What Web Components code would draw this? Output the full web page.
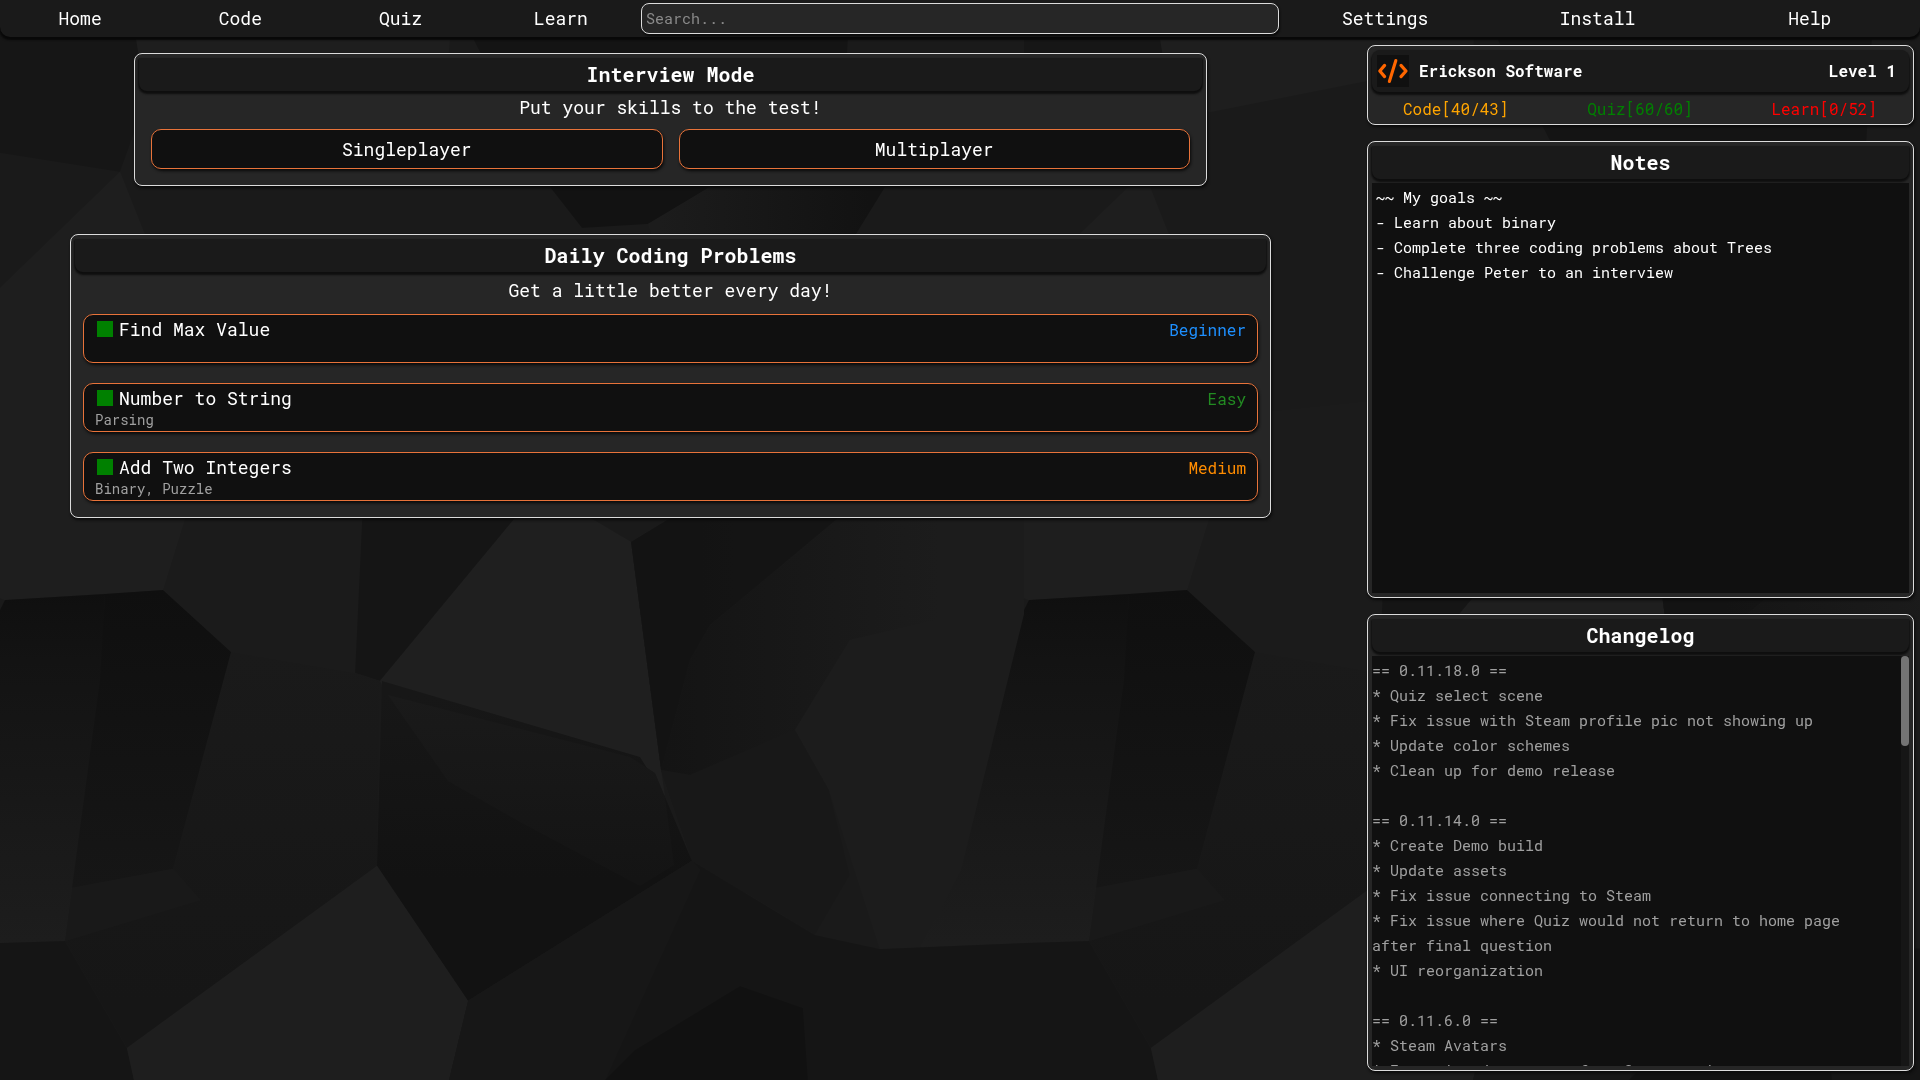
<!DOCTYPE html>
<html lang="en">
<head>
<meta charset="utf-8">
<title>Home</title>
<style>
  html { height: 100%; background: #1a1a1a; }
  body {
    --mono: "Roboto Mono", "DejaVu Sans Mono", "Liberation Mono", monospace;
    --bar: #1a1a1a;
    --panel: #262626;
    --well: #101010;
    --line: #dcdcdc;
    --accent: #e8733a;
    --muted: #a0a0a0;
    margin: 0;
    height: 100%;
    font: 18px/24px var(--mono);
    color: #fff;
    overflow: hidden;
  }
</style>
</head>
<body>
<app-shell>
  <app-nav slot="nav"></app-nav>

  <ui-panel slot="main" heading="Interview Mode" style="--w: 80%">
    <interview-menu></interview-menu>
  </ui-panel>
  <ui-panel slot="main" heading="Daily Coding Problems" style="--w: 1201px">
    <daily-list>
      <problem-card name="Find Max Value" level="Beginner" color="dodgerblue"></problem-card>
      <problem-card name="Number to String" level="Easy" color="forestgreen" tags="Parsing"></problem-card>
      <problem-card name="Add Two Integers" level="Medium" color="darkorange" tags="Binary, Puzzle"></problem-card>
    </daily-list>
  </ui-panel>

  <profile-card slot="side" name="Erickson Software" level="Level 1"></profile-card>
  <ui-panel slot="side" class="grow" heading="Notes"><notes-pad></notes-pad></ui-panel>
  <ui-panel slot="side" class="grow" heading="Changelog"><change-log>== 0.11.18.0 ==
* Quiz select scene
* Fix issue with Steam profile pic not showing up
* Update color schemes
* Clean up for demo release

== 0.11.14.0 ==
* Create Demo build
* Update assets
* Fix issue connecting to Steam
* Fix issue where Quiz would not return to home page after final question
* UI reorganization

== 0.11.6.0 ==
* Steam Avatars
* Interview data comes from Server using</change-log></ui-panel>
</app-shell>

<script>
const define = (name, html, setup) => {
  const template = document.createElement('template');
  template.innerHTML = html;
  customElements.define(name, class extends HTMLElement {
    connectedCallback() {
      if (this.shadowRoot) return;
      const root = this.attachShadow({ mode: 'open' });
      root.append(template.content.cloneNode(true));
      root.querySelectorAll('[data-attr]').forEach(el => {
        el.textContent = this.getAttribute(el.dataset.attr) || '';
      });
      if (setup) setup(this, root);
    }
  });
};

/* Faceted dark wallpaper, repeated every 1024px */
define('facet-backdrop', `
  <style>
    :host { display: block; position: fixed; inset: 0; z-index: -1; }
    svg { display: block; width: 100%; height: 100%; }
  </style>
  <svg aria-hidden="true">
    <defs>
      <linearGradient id="a" x1="0" y1="590" x2="0" y2="942" gradientUnits="userSpaceOnUse"><stop offset="0" stop-color="#0f0f0f"/><stop offset=".2" stop-color="#131313"/><stop offset="1" stop-color="#1d1d1d"/></linearGradient>
      <linearGradient id="b" x1="0" y1="590" x2="0" y2="888" gradientUnits="userSpaceOnUse"><stop offset="0" stop-color="#0f0f0f"/><stop offset="1" stop-color="#161616"/></linearGradient>
      <linearGradient id="h" x1="0" y1="652" x2="0" y2="1000" gradientUnits="userSpaceOnUse"><stop offset="0" stop-color="#1a1a1a"/><stop offset="1" stop-color="#161616"/></linearGradient>
      <linearGradient id="e" x1="0" y1="695" x2="0" y2="1001" gradientUnits="userSpaceOnUse"><stop offset="0" stop-color="#171717"/><stop offset=".6" stop-color="#121212"/><stop offset="1" stop-color="#121212"/></linearGradient>
      <linearGradient id="f" x1="0" y1="695" x2="0" y2="880" gradientUnits="userSpaceOnUse"><stop offset="0" stop-color="#1a1a1a"/><stop offset="1" stop-color="#141414"/></linearGradient>
      <linearGradient id="k" x1="631" y1="0" x2="940" y2="0" gradientUnits="userSpaceOnUse"><stop offset="0" stop-color="#131313"/><stop offset="1" stop-color="#1c1c1c"/></linearGradient>
      <linearGradient id="t" x1="660" y1="0" x2="870" y2="0" gradientUnits="userSpaceOnUse"><stop offset="0" stop-color="#1c1c1c"/><stop offset="1" stop-color="#121212"/></linearGradient>
      <pattern id="facets" width="1024" height="1080" patternUnits="userSpaceOnUse">
        <rect width="1024" height="1080" fill="#1a1a1a"/>
        <path fill="#161616" d="M0 0H130L146 100 120 172 0 153Z"/>
        <path fill="#1e1e1e" d="M130 0H453L448 60 186 112 146 100Z"/>
        <path fill="#141414" d="M453 0H850L840 187H550Z"/>
        <path fill="#1e1e1e" d="M120 172 147 240 185 519 163 590 5 600 0 598V288Z"/>
        <path fill="#1b1b1b" d="M170 420 343 402 363 519 355 673 231 652 163 590 185 519Z"/>
        <path fill="#121212" d="M550 187H710L648 224 582 228Z"/>
        <path fill="url(#t)" d="M648 224 710 187H885L840 260H660Z"/>
        <path fill="#151515" d="M363 500H530L380 681 355 673Z"/>
        <path fill="#1f1f1f" d="M530 500H560L631 542 661 770 665 797 655 773 630 757 388 695 380 681Z"/>
        <path fill="url(#k)" d="M631 542 700 500H1024V598L961 870 880 949 829 790 740 900 692 861 661 770Z"/>
        <path fill="#131313" d="M631 542 700 500H860L710 625 690 660 661 770Z" opacity=".7"/>
        <path fill="#1c1c1c" d="M795 730 850 640 1024 600 1024 943 880 949 829 790Z"/>
        <path fill="#181818" d="M692 861 661 770 690 775 795 730 829 790 850 875 815 935Z"/>
        <path fill="url(#h)" d="M231 652 355 673 380 681 377 866 127 1048 65 941 72 888 173 869Z"/>
        <path fill="url(#e)" d="M382 681 377 866 468 1001 692 861 665 797 640 757Z"/>
        <path fill="url(#f)" d="M388 695 630 757 655 773 665 797 674 865 640 886 520 822 448 781Z"/>
        <path fill="url(#a)" d="M5 600 105 594 102 680 65 941 0 943V610Z"/>
        <path fill="url(#a)" d="M1024 614V943L920 947 961 870Z"/>
        <path fill="url(#b)" d="M105 594 163 590 231 652 173 869 72 888 100 680Z"/>
        <path fill="#191919" d="M72 888 173 869 200 900 65 941Z"/>
        <path fill="#151515" d="M0 943 65 941 127 1048 134 1080H0Z"/>
        <path fill="#1e1e1e" d="M377 866 468 1001 449 1080H134L127 1048Z"/>
        <path fill="#151515" d="M468 1001 692 861 815 935 880 949 1024 943V1080H449Z"/>
        <path fill="#171717" d="M692 861 700 870 605 1080H449L468 1001Z"/>
        <path fill="#111" d="M740 986 803 1008 808 1080H605L635 1050Z"/>
      </pattern>
    </defs>
    <rect width="100%" height="100%" fill="url(#facets)"/>
  </svg>`);

define('app-shell', `
  <style>
    :host { display: flex; flex-direction: column; height: 100vh; }
    .cols { flex: 1; min-height: 0; display: grid; grid-template-columns: 1341fr 579fr; }
    main { display: flex; flex-direction: column; align-items: center; gap: 48px; padding-top: 16px; }
    aside { display: flex; flex-direction: column; gap: 16px; min-height: 0; box-sizing: border-box; padding: 8px 6px 9px 26px; }
  </style>
  <facet-backdrop></facet-backdrop>
  <slot name="nav"></slot>
  <div class="cols">
    <main><slot name="main"></slot></main>
    <aside><slot name="side"></slot></aside>
  </div>`);

define('app-nav', `
  <style>
    :host { display: block; background: var(--bar); border-radius: 0 0 10px 10px; box-shadow: 0 2px 2px 1px #080808; }
    nav { display: grid; grid-template-columns: 641fr 638fr 637fr; align-items: center; height: 37px; padding-right: 4px; }
    .links { display: flex; padding-bottom: 2px; }
    a { flex: 1 1 0; text-align: center; color: inherit; text-decoration: none; }
    input { box-sizing: border-box; width: 100%; height: 31px; padding: 0 4px 2px; border: 1px solid var(--line); border-radius: 8px;
      background: var(--panel); color: #fff; font: 15px/20px var(--mono); outline: 0; box-shadow: 1px 2px 2px #0a0a0a; }
    input::placeholder { color: #8a8a8a; opacity: 1; }
  </style>
  <nav>
    <div class="links"><a href="#home">Home</a><a href="#code">Code</a><a href="#quiz">Quiz</a><a href="#learn">Learn</a></div>
    <input type="search" placeholder="Search..." aria-label="Search">
    <div class="links"><a href="#settings">Settings</a><a href="#install">Install</a><a href="#help">Help</a></div>
  </nav>`);

define('ui-panel', `
  <style>
    :host { display: flex; flex-direction: column; box-sizing: border-box; width: var(--w, 100%); padding: 4px;
      border: 1px solid var(--line); border-radius: 8px; background: var(--panel); box-shadow: 1px 2px 3px #0a0a0a; }
    :host(.grow) { flex: 1 1 0; min-height: 0; }
    h2 { margin: 0; flex: none; background: var(--bar); border-radius: 0 0 8px 8px; box-shadow: 0 2px 2px 1px #0e0e0e;
      font-size: 20px; line-height: 33px; font-weight: 700; text-align: center; }
    .body { flex: 1; min-height: 0; display: flex; flex-direction: column; }
    :host(.grow) .body { padding-top: 4px; }
  </style>
  <h2 data-attr="heading"></h2>
  <div class="body"><slot></slot></div>`);

define('interview-menu', `
  <style>
    :host { display: block; padding: 4px 12px 12px; }
    p { margin: 0 0 10px; text-align: center; }
    .row { display: flex; gap: 16px; }
    button { flex: 1 1 0; height: 40px; padding: 0; border: 1px solid var(--accent); border-radius: 10px; background: var(--well);
      color: inherit; font: inherit; box-shadow: 1px 2px 3px #0a0a0a; }
  </style>
  <p>Put your skills to the test!</p>
  <div class="row"><button type="button">Singleplayer</button><button type="button">Multiplayer</button></div>`);

define('daily-list', `
  <style>
    :host { display: block; padding: 6px 8px 12px; }
    p { margin: 0 0 12px; text-align: center; }
    .list { display: flex; flex-direction: column; gap: 20px; }
  </style>
  <p>Get a little better every day!</p>
  <div class="list"><slot></slot></div>`);

define('problem-card', `
  <style>
    :host { display: block; }
    a { display: grid; grid-template-columns: 1fr auto; grid-template-rows: 28px 19px; padding: 0 11px; border: 1px solid var(--accent);
      border-radius: 10px; background: var(--well); color: inherit; text-decoration: none; box-shadow: 1px 2px 3px #0a0a0a; }
    .name { display: flex; align-items: center; gap: 6px; padding-left: 2px; }
    i { width: 16px; height: 16px; background: green; }
    .level { font-size: 16px; line-height: 30px; }
    .tags { grid-column: 1 / -1; font-size: 14px; line-height: 16px; color: var(--muted); }
  </style>
  <a href="#problem">
    <span class="name"><i></i><span data-attr="name"></span></span>
    <span class="level" data-attr="level"></span>
    <span class="tags" data-attr="tags"></span>
  </a>`, (host, root) => { root.querySelector('.level').style.color = host.getAttribute('color'); });

define('code-mark', `
  <style>:host { display: block; width: 32px; height: 32px; background: #101010; } svg { display: block; }</style>
  <svg width="32" height="32" viewBox="0 0 32 32" fill="none" stroke="#ff6600" stroke-width="3.2" stroke-linecap="round" stroke-linejoin="round" aria-hidden="true">
    <path d="M7.6 10.4 2.8 16 7.6 21.6M18.8 5.6 12.4 26.4M24 10.4 29 16 24 21.6"/>
  </svg>`);

define('profile-card', `
  <style>
    :host { display: block; flex: none; box-sizing: border-box; height: 80px; padding: 4px; border: 1px solid var(--line); border-radius: 8px;
      background: var(--panel); box-shadow: 1px 2px 3px #0a0a0a; font-size: 16px; }
    header { display: flex; align-items: center; gap: 10px; height: 42px; padding: 0 13px 0 5px; background: var(--bar);
      border-radius: 8px; box-shadow: 0 2px 2px 1px #0e0e0e; font-weight: 700; }
    .level { margin-left: auto; }
    .stats { display: flex; justify-content: space-between; padding: 5px 32px 0 31px; }
  </style>
  <header><code-mark></code-mark><span data-attr="name"></span><span class="level" data-attr="level"></span></header>
  <div class="stats">
    <span style="color: orange">Code[40/43]</span>
    <span style="color: green">Quiz[60/60]</span>
    <span style="color: red">Learn[0/52]</span>
  </div>`);

define('notes-pad', `
  <style>
    :host { flex: 1; min-height: 0; display: flex; }
    textarea { flex: 1; min-width: 0; box-sizing: border-box; margin: 0; padding: 2px 4px; border: 0; border-radius: 0; outline: 0; resize: none;
      background: var(--well); color: #fff; font: 15px/25px var(--mono); }
  </style>
  <textarea aria-label="Notes" spellcheck="false">~~ My goals ~~
- Learn about binary
- Complete three coding problems about Trees
- Challenge Peter to an interview</textarea>`);

define('change-log', `
  <style>
    :host { flex: 1; min-height: 0; display: flex; background: var(--well); }
    .text { flex: 1; overflow: hidden auto; scrollbar-width: none; padding: 2px 12px 0 0; white-space: pre-wrap; font-size: 15px; line-height: 25px; color: var(--muted); }
    .track { width: 8px; background: #161616; }
    .thumb { height: 22%; border-radius: 4px; background: #747474; }
  </style>
  <div class="text" tabindex="0"><slot></slot></div>
  <div class="track"><div class="thumb"></div></div>`);
</script>
</body>
</html>
